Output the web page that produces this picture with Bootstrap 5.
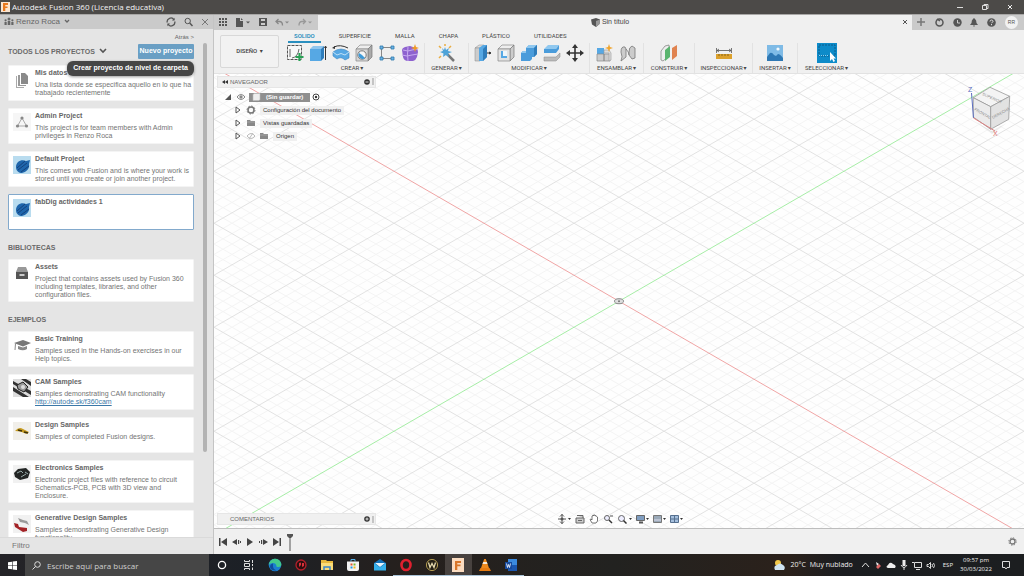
<!DOCTYPE html>
<html lang="es">
<head>
<meta charset="utf-8">
<meta name="viewport" content="width=device-width, initial-scale=1">
<title>Autodesk Fusion 360 (Licencia educativa)</title>
<link href="https://cdn.jsdelivr.net/npm/bootstrap@5.3.0/dist/css/bootstrap.min.css" rel="stylesheet">
<style>
body{font-family:"Liberation Sans",Arial,sans-serif;font-size:7px;line-height:8px;color:#555;background:#f0f0f0}
button{border:0;background:none;padding:0;color:inherit;font-family:inherit;font-size:inherit;line-height:inherit}
svg{display:block;flex:none}
.segoe{font-family:"Open Sans","Noto Sans",sans-serif}
.titlebar{height:15px;background:#4c4a48;color:#f4f4f4;font-size:8px;line-height:12px;padding:0 10px 0 1px;border-bottom:1px solid #a8a7a6}
.wincontrols{gap:17px}
/* data panel */
.datapanel{width:214px;flex:none;background:#e5e5e5;border-right:1px solid #c4c4c4}
.panelhead{height:15px;background:#cacaca;padding:0 4px 0 4px;font-size:8px;color:#666}
.panelbody{padding:4px 19px 0 8px;overflow:hidden;min-height:0}
.scrollthumb{position:absolute;right:6px;top:14px;width:4px;height:calc(100% - 116px);background:#b3b3b3;border-radius:2px}
.backlink{font-size:6px;color:#666;text-decoration:none}
.sect{font-size:7px;line-height:9px;font-weight:bold;color:#6a6a6a}
.newbtn{width:56px;height:15px;background:#6a9fc4;color:#fff;font-weight:bold;border-radius:1px}
.tip{position:absolute;right:19px;top:32px;background:#464646;color:#fff;font-weight:bold;border-radius:6px;height:15px;line-height:14px;padding:0 6px;box-shadow:0 1px 3px #0006;z-index:2}
.proj{background:#fff;border:1px solid #f4f4f4;min-height:36px;padding:2px 1px 1px 4px;gap:4px;border-radius:1px}
.proj.active-proj{border-color:#82a9cc}
.proj h3{font-size:7px;line-height:9px;margin:0 0 4px;font-weight:bold;color:#666}
.proj p{margin:0;color:#747474}
.proj.tall{min-height:43px}
.projlist{gap:7px}
.thumb{width:18px;height:18px;margin-top:2px}
.filterbar{height:18px;padding:0 12px;background:#e5e5e5;border-top:1px solid #dadada}
.filterbar input{border:0;background:none;font-size:8px;padding:0;outline:0}
.filterbar input::placeholder{color:#777;opacity:1}
/* document tabs and ribbon */
.doctabs{height:15px}
.qat{background:#cacaca;width:104px;padding:0 6px 0 5px}
.doctitle{background:#f0f0f0;color:#444;padding-right:10px}
.docright{background:#cacaca;padding:0 6px 0 4px;width:112px}
.avatar{width:13px;height:13px;border-radius:50%;background:#f2f2f2;font-size:5px;line-height:13px;color:#555}
.ribbon{height:44px;font-family:Roboto,sans-serif;font-size:6px;color:#444;border-bottom:1px solid #e2e2e2}
.workspace{width:59px;height:33px;margin:5px 0 0 6px;border:1px solid #d8d8d8;border-radius:2px;font-weight:500;background:#f2f2f2}
.rtabs{height:13px;padding-left:8px;gap:12px}
.rtabs button{padding:0 6px;height:13px;border-bottom:2px solid transparent;line-height:12px}
.rtabs .cur{color:#1787ba;border-color:#2a8fbf;font-weight:500}
.grp{height:30px;border-right:1px solid #e2e2e2;flex:none}
.grp:last-child{border:0}
.icons{gap:5px;height:21px}
.caret::after{content:"▾";font-family:"DejaVu Sans",sans-serif;font-size:6px;margin-left:1px}
/* canvas */
.viewport{background:#fefefe;min-height:0}
.overpanel{position:absolute;left:3px;width:159px;height:12px;background:#f0f0f0;font-size:6px;color:#666;border:1px solid #e6e6e6;padding:0 0 0 4px;gap:2px}
.browsertree{position:absolute;left:10px;top:17px;font-size:6px;color:#333}
.browsertree .line{height:13px}
.pill{background:#f0f0f0;padding:0 3px;height:9px;line-height:9px}
.rootnode{background:#8f8f8f;color:#fff;width:61px;height:9px;gap:5px;padding-left:3px;margin:0 2px 0 3px}
.navbarlow{position:absolute;left:343px;bottom:3px;height:12px;gap:4px}
.cubebox{position:absolute;right:10px;top:8px}
.timeline{height:26px;border-top:1px solid #bdbdbd;padding:0 7px 0 5px;background:#f0f0f0}
/* taskbar */
.taskbar{height:22px;background:linear-gradient(90deg,#242327,#1c2026 25%,#26201d 40%,#222220 60%,#2b211b 77%,#1b1d20 82%,#1c1e20);color:#eee;font-size:7px}
.winstart{width:25px;height:22px}
.search{width:184px;height:22px;background:#464646;padding-left:7px;gap:6px}
.search input{border:0;background:none;color:#ccc;font-size:8px;padding:0;outline:0;width:150px}
.search input::placeholder{color:#cfcfcf;opacity:1}
.apps{width:315px}
.apps button{height:22px;border-bottom:1px solid transparent}
.apps .run{border-color:#aac4d8}
.apps .front{background:#48423f}
.clock{font-size:6px;line-height:9px;width:38px}
</style>
</head>
<body class="vh-100 overflow-hidden d-flex flex-column">

<header class="titlebar segoe d-flex align-items-center">
  <svg width="9" height="10" viewBox="0 0 9 10" style="margin-right:2px"><rect width="9" height="10" fill="#fbe4cf"/><path d="M2 1h5v2H4.300v1.500h2.200v1.500H4.300V9H2z" fill="#e8781e"/></svg>
  <span>Autodesk Fusion 360 (Licencia educativa)</span>
  <div class="wincontrols ms-auto d-flex">
    <button aria-label="Minimizar"><svg width="8" height="8" stroke="#ddd"><path d="M1 4.500h6"/></svg></button>
    <button aria-label="Restaurar"><svg width="8" height="8" stroke="#ddd" fill="none"><path d="M1.500 2.500h4v4h-4zM3 2.500v-1h4v4h-1"/></svg></button>
    <button aria-label="Cerrar"><svg width="8" height="8" stroke="#eee"><path d="M2 2l4 4M6 2l-4 4"/></svg></button>
  </div>
</header>

<main class="d-flex flex-fill" style="min-height:0">
  <aside class="datapanel d-flex flex-column">
    <div class="panelhead d-flex align-items-center">
      <svg width="10" height="9" fill="#666"><circle cx="5" cy="2" r="1.500"/><path d="M3.700 4h2.600v4H3.700zM.5 5h2.200v3H.5zM7.300 5h2.200v3H7.300z"/><circle cx="1.600" cy="3.300" r="1.100"/><circle cx="8.400" cy="3.300" r="1.100"/></svg>
      <span style="margin-left:2px">Renzo Roca</span>
      <svg class="ms-1" width="6" height="5" fill="none" stroke="#666" stroke-width="1.300"><path d="M1 1l2 2 2-2"/></svg>
      <button class="ms-auto" aria-label="Actualizar"><svg width="10" height="10" fill="none" stroke="#555" stroke-width="1.300"><path d="M1.300 5.500A3.600 3.600 0 0 1 8 3M8.700 4.500A3.600 3.600 0 0 1 2 7"/><path d="M8.600.8v2.700H6zM1.400 9.200V6.500H4z" fill="#555" stroke="none"/></svg></button>
      <button class="ms-2" aria-label="Buscar"><svg width="9" height="10" fill="none" stroke="#555"><circle cx="3.700" cy="4" r="2.700"/><path d="M5.700 6L8.500 9" stroke-width="1.500"/></svg></button>
      <button class="ms-2" aria-label="Cerrar panel"><svg width="8" height="8" stroke="#777"><path d="M1 1l6 6M7 1l-6 6"/></svg></button>
    </div>
    <div class="position-relative flex-fill d-flex flex-column" style="min-height:0">
      <div class="panelbody flex-fill">
        <div class="text-end"><a href="#" class="backlink">Atrás &gt;</a></div>
        <div class="d-flex align-items-center mb-2 mt-1" style="height:12px">
          <span class="sect">TODOS LOS PROYECTOS</span>
          <svg class="ms-1" width="8" height="6" fill="none" stroke="#555" stroke-width="1.600"><path d="M1 1l3 3 3-3"/></svg>
          <button class="newbtn ms-auto">Nuevo proyecto</button>
        </div>
        <div class="tip" role="tooltip">Crear proyecto de nivel de carpeta</div>
        <div class="projlist d-flex flex-column">
          <article class="proj d-flex"><svg class="thumb" viewBox="0 0 18 18"><path d="M8 3h4l3 3v8H8z" fill="#8a8a8a"/><path d="M5 5h2v10h6v1H5z" fill="#999"/><path d="M3 6h1v11h7v1H3z" fill="#aaa"/></svg><div><h3>Mis datos</h3><p>Una lista donde se especifica aquello en lo que ha trabajado recientemente</p></div></article>
          <article class="proj d-flex"><svg class="thumb" viewBox="0 0 18 18"><rect width="18" height="18" fill="#f6f6f6"/><path d="M9 5L4.500 13h9z" fill="none" stroke="#aaa"/><g fill="#888"><circle cx="9" cy="5" r="1.600"/><circle cx="4.500" cy="13" r="1.600"/><circle cx="13.500" cy="13" r="1.600"/></g></svg><div><h3>Admin Project</h3><p>This project is for team members with Admin privileges in Renzo Roca</p></div></article>
          <article class="proj d-flex"><svg class="thumb" viewBox="0 0 18 18"><rect width="18" height="18" fill="#b9dcef"/><path d="M3 11C3 6 8 3 13 5l4-1-1 4c1 5-3 8-7 9-3 0-6-2-6-6z" fill="#1f66ac"/><path d="M4 12l8-7M5 14l9-7M8 16l8-6" stroke="#14427d" fill="none"/></svg><div><h3>Default Project</h3><p>This comes with Fusion and is where your work is stored until you create or join another project.</p></div></article>
          <article class="proj active-proj d-flex"><svg class="thumb" viewBox="0 0 18 18"><rect width="18" height="18" fill="#b9dcef"/><path d="M3 11C3 6 8 3 13 5l4-1-1 4c1 5-3 8-7 9-3 0-6-2-6-6z" fill="#1f66ac"/><path d="M4 12l8-7M5 14l9-7M8 16l8-6" stroke="#14427d" fill="none"/></svg><div><h3>fabDig actividades 1</h3></div></article>
        </div>
        <div class="sect" style="margin:13px 0 7px">BIBLIOTECAS</div>
        <article class="proj tall d-flex"><svg class="thumb" viewBox="0 0 18 18"><path d="M5 3h8l2 5H3z" fill="#999"/><path d="M3 8h12v7H3z" fill="#555"/><path d="M6.500 10h5v2h-5z" fill="#ccc"/></svg><div><h3>Assets</h3><p>Project that contains assets used by Fusion 360 including templates, libraries, and other configuration files.</p></div></article>
        <div class="sect" style="margin:13px 0 7px">EJEMPLOS</div>
        <div class="projlist d-flex flex-column">
          <article class="proj d-flex"><svg class="thumb" viewBox="0 0 18 18"><path d="M1 7l9-3 8 3-8 3.500z" fill="#777"/><path d="M5 10v3q5 2.500 9 0v-3l-4 1.500z" fill="#888"/><path d="M2.500 7.500L2 14" stroke="#888"/></svg><div><h3>Basic Training</h3><p>Samples used in the Hands-on exercises in our Help topics.</p></div></article>
          <article class="proj d-flex"><svg class="thumb" viewBox="0 0 18 18"><rect width="18" height="18" fill="#ddd"/><path d="M0 2l18 10v4L0 5zM0 8l16 10h-6L0 12zM8 0l10 7V3L13 0z" fill="#333"/><path d="M4 6l6-3 5 5-4 5-6-3z" fill="#999" stroke="#222"/><circle cx="10" cy="8" r="2" fill="#ddd"/></svg><div><h3>CAM Samples</h3><p>Samples demonstrating CAM functionality <a href="#" style="color:#3b78a8">http://autode.sk/f360cam</a></p></div></article>
          <article class="proj d-flex"><svg class="thumb" viewBox="0 0 18 18"><rect width="18" height="18" fill="#f1efea"/><path d="M2 9q4-5 8-2l6 3q-2 3-5 1T2 9z" fill="#c79b20"/><path d="M5 8l4 1M11 10l4 1" stroke="#3d3108" stroke-width="1.500"/></svg><div><h3>Design Samples</h3><p>Samples of completed Fusion designs.</p></div></article>
          <article class="proj tall d-flex"><svg class="thumb" viewBox="0 0 18 18"><rect width="18" height="18" fill="#f1f1f1"/><path d="M1 8l4-4 8-1 4 4-2 6-8 2-5-3z" fill="#232625"/><path d="M4 8l4-2 2 2M8 12l5-3M12 7l3 2" stroke="#9aa" fill="none"/></svg><div><h3>Electronics Samples</h3><p>Electronic project files with reference to circuit Schematics-PCB, PCB with 3D view and Enclosure.</p></div></article>
          <article class="proj tall d-flex"><svg class="thumb" viewBox="0 0 18 18"><rect width="18" height="18" fill="#f1f1f1"/><path d="M5 3l5 2 4 1 2 4-4-2-5-1z" fill="#9a9a9a"/><path d="M1 8l4 1 1 3 8 1v3l-4 1-8-5z" fill="#a32327"/></svg><div><h3>Generative Design Samples</h3><p>Samples demonstrating Generative Design functionality.</p></div></article>
        </div>
      </div>
      <div class="scrollthumb"></div>
      <div class="filterbar d-flex align-items-center"><input type="text" class="w-100" placeholder="Filtro" aria-label="Filtro"></div>
    </div>
  </aside>

  <section class="flex-fill d-flex flex-column" style="min-width:0">
    <div class="doctabs d-flex">
      <div class="qat d-flex align-items-center justify-content-between">
        <button aria-label="Panel de datos"><svg width="8" height="8" fill="#555"><path d="M0 0h2v2H0zM3 0h2v2H3zM6 0h2v2H6zM0 3h2v2H0zM3 3h2v2H3zM6 3h2v2H6zM0 6h2v2H0zM3 6h2v2H3zM6 6h2v2H6z"/></svg></button>
        <button aria-label="Archivo"><svg width="14" height="9" fill="#555"><path d="M0 0h4v3h3v6H0zM5 0l2 2H5zM10 3.500h4l-2 2z"/></svg></button>
        <button aria-label="Guardar"><svg width="8" height="8"><path d="M0 0h8v8H0z" fill="#555"/><path d="M2 1h4v2H2zM2 5h4v2H2z" fill="#ccc"/></svg></button>
        <button aria-label="Deshacer"><svg width="14" height="9" fill="none" stroke="#888" stroke-width="1.300"><path d="M3.500 1L1 3.500 3.500 6M1 3.500h3.500q3 0 3 4"/><path d="M10 3.500h4l-2 2z" fill="#888" stroke="none"/></svg></button>
        <button aria-label="Rehacer"><svg width="14" height="9" fill="none" stroke="#999" stroke-width="1.300"><path d="M5 1l2.500 2.500L5 6M7.500 3.500H4q-3 0-3 4"/><path d="M10 3.500h4l-2 2z" fill="#999" stroke="none"/></svg></button>
      </div>
      <div class="doctitle flex-fill d-flex align-items-center justify-content-center position-relative">
        <svg width="9" height="9" style="margin-right:2px"><path d="M0 1.500L5 0l4 1.500L8.500 6 5 9 1 6.500z" fill="#555"/><path d="M5 3l4-1.500L8.500 6 5 9z" fill="#999"/></svg>Sin título
        <button class="position-absolute end-0 me-1" aria-label="Cerrar documento"><svg width="6" height="6" stroke="#555"><path d="M1 1l4 4M5 1L1 5"/></svg></button>
      </div>
      <div class="docright d-flex align-items-center justify-content-between">
        <button aria-label="Nuevo documento"><svg width="10" height="8" stroke="#777" stroke-width="1.500"><path d="M5 0v8M1 4h8"/></svg></button>
        <button aria-label="Extensiones"><svg width="9" height="9" fill="none" stroke="#555" stroke-width="1.500"><circle cx="4.500" cy="4.500" r="3.500"/><path d="M2 1l3 2"/></svg></button>
        <button aria-label="Estado del trabajo"><svg width="9" height="9"><circle cx="4.500" cy="4.500" r="4.200" fill="#555"/><path d="M4.500 2v3H7" stroke="#ccc" fill="none"/></svg></button>
        <button aria-label="Notificaciones"><svg width="8" height="9" fill="#555"><path d="M4 0l1 1q1.500 1 1.500 4L8 7H0l1.500-2Q1.500 2 3 1zM3 7.500h2L4 9z"/></svg></button>
        <button aria-label="Ayuda"><svg width="9" height="9"><circle cx="4.500" cy="4.500" r="4.300" fill="#555"/><path d="M3 3.500Q3 2 4.500 2T6 3.500Q6 4.300 4.500 4.800M4.500 6v1.200" stroke="#ddd" fill="none"/></svg></button>
        <span class="avatar text-center">RR</span>
      </div>
    </div>

    <div class="ribbon d-flex">
      <button class="workspace caret">DISEÑO </button>
      <div class="d-flex flex-column" style="margin-left:1px">
        <nav class="rtabs d-flex"><button class="cur">SOLIDO</button><button>SUPERFICIE</button><button>MALLA</button><button>CHAPA</button><button>PLÁSTICO</button><button>UTILIDADES</button></nav>
        <div class="d-flex">
          <div class="grp d-flex flex-column align-items-center" style="width:145px"><div class="icons d-flex align-items-center">
            <svg width="18" height="18"><path d="M1.500 1.500h14v14h-14z" fill="#f8f8f8" stroke="#555" stroke-dasharray="3 1"/><path d="M4 13V5M6 14q6-1 7-9" stroke="#666" fill="none"/><path d="M13.500 9v8M9.500 13h8" stroke="#2aa055" stroke-width="2.200"/></svg>
            <svg width="18" height="18"><path d="M1 5l3-3h11l-3 3z" fill="#8fc6ee"/><path d="M1 5h11v12H1z" fill="#56a8e4"/><path d="M12 5l3-3v12l-3 3z" fill="#2f7dbb"/><path d="M16.500 3v13M15.500 4l1-2 1 2" stroke="#333" fill="none"/></svg>
            <svg width="18" height="18"><path d="M1 8Q9 2 17 8v6l-4 2q-4-4-8-1l-4-3z" fill="#56a8e4" stroke="#3c84bd" stroke-width=".6"/><path d="M1 8l4 3q4-3 8 0l4-3" fill="none" stroke="#bfe0f6"/><path d="M2 3q6-3 14 1" stroke="#333" fill="none"/><path d="M0 4l3-2v3z" fill="#333"/></svg>
            <svg width="18" height="18"><path d="M1 5l4-4h12l-4 4z" fill="#eee" stroke="#888" stroke-width=".7"/><path d="M13 5l4-4v12l-4 4z" fill="#aaa" stroke="#777" stroke-width=".7"/><path d="M1 5h12v12H1z" fill="#d6d6d6" stroke="#888" stroke-width=".7"/><circle cx="7" cy="11" r="4.200" fill="#f5f5f5" stroke="#777"/><path d="M4 9a4 4 0 0 0 6 5L7 11z" fill="#3d9ad8"/></svg>
            <svg width="18" height="18"><path d="M4 3.500h9M3.500 5v8M5 14.500h8" stroke="#888"/><path d="M2 2h3v3H2zM13 2h3v3h-3zM2 13h3v3H2zM13 13h3v3h-3z" fill="#6bb3e6" stroke="#2e78ab" stroke-width=".8"/></svg>
            <svg width="18" height="18"><path d="M1 6q0-2 3-3l5-1 6 2q2 1 2 4l-1 5q-1 3-4 4H7q-4 0-5-4z" fill="#8e62cf"/><path d="M2 6q5 2 9 0l5-1M7 3q-1 7 0 14M1 11q5 2 10 0l6-1" fill="none" stroke="#c7aaf0"/><path d="M14 0l1 3 3 1-3 1-1 3-1-3-3-1 3-1z" fill="#f09a24"/></svg>
          </div><button class="caret">CREAR</button></div>
          <div class="grp d-flex flex-column align-items-center" style="width:44px"><div class="icons d-flex align-items-center">
            <svg width="18" height="18"><path d="M8 9l8 8" stroke="#777" stroke-width="2.500"/><path d="M7 3l1 3 3-2-1 3 4 1-4 1.500 1 3.500-3-2-3 2 .5-3.500L2 8l3-1-1-3 2 2z" fill="#4ea3d8"/><path d="M7 0v2M1 2l2 2M13 2l-2 2M1 14l2-2" stroke="#e9ad42" stroke-width="1.500"/></svg>
          </div><button class="caret">GENERAR</button></div>
          <div class="grp d-flex flex-column align-items-center" style="width:121px"><div class="icons d-flex align-items-center">
            <svg width="18" height="18"><path d="M1 4l4-3h5l-3 3z" fill="#ddd" stroke="#888" stroke-width=".5"/><path d="M1 4h5v13H1z" fill="#ccc" stroke="#888" stroke-width=".5"/><path d="M5 4l4-3h4v12l-4 4H5z" fill="#56a8e4"/><path d="M9 5l4-4v12l-4 4z" fill="#2f7dbb"/><path d="M13 9h3M15.500 8l1.500 1-1.500 1z" stroke="#333" fill="#333"/></svg>
            <svg width="18" height="18"><path d="M1 5l4-4h12l-4 4z" fill="#eee" stroke="#888" stroke-width=".7"/><path d="M13 5l4-4v12l-4 4z" fill="#ccc" stroke="#777" stroke-width=".7"/><path d="M1 5h12v12H1z" fill="#e2e2e2" stroke="#888" stroke-width=".7"/><path d="M4 7h6v7H4z" fill="#56a8e4"/><path d="M6 7h4v5H6z" fill="#eef6fb"/></svg>
            <svg width="18" height="18"><path d="M6 4l3-3h8v9l-3 3h-2v2l-2 2H1V9l2-2h3z" fill="#4a9cdb"/><path d="M6 4l3-3h8l-3 3zM1 9l2-2h3v2z" fill="#90c8ef"/><path d="M14 4l3-3v9l-3 3z" fill="#2f7dbb"/></svg>
            <svg width="18" height="18"><path d="M1 5l4-4h11l-3 4z" fill="#90c8ef"/><path d="M1 5h12l3-4v4l-3 4H1z" fill="#4a9cdb"/><path d="M1 12h12l4-4" stroke="#eee" stroke-width="2" fill="none"/><path d="M1 13h12l4-4v4l-4 4H1z" fill="#bbb" stroke="#888" stroke-width=".5"/></svg>
            <svg width="18" height="18"><path d="M9 2v14M2 9h14" stroke="#333" stroke-width="1.600"/><path d="M9 0l3 4H6zM9 18l3-4H6zM0 9l4-3v6zM18 9l-4-3v6z" fill="#333"/></svg>
          </div><button class="caret">MODIFICAR</button></div>
          <div class="grp d-flex flex-column align-items-center" style="width:54px"><div class="icons d-flex align-items-center">
            <svg width="18" height="18"><path d="M1 4h7v6H1z" fill="#56a8e4"/><path d="M1 10h7v7H1zM8 10h6v7H8z" fill="#ccc" stroke="#888" stroke-width=".7"/><path d="M8 6h5l2 3v7l-2 1V9H8z" fill="#ddd" stroke="#999" stroke-width=".6"/><path d="M13 0l1 3 3 1-3 1-1 3-1-3-3-1 3-1z" fill="#f0a52e"/></svg>
            <svg width="18" height="18" fill="#ccc" stroke="#777" stroke-width=".8"><path d="M2 8q0-6 4-5l1 2v8l-5 4q2-4 0-9zM10 8q0-5 3-6l3 2v10l-3 1-3-4z"/><path d="M7 5q3 3 3 6" fill="none"/></svg>
          </div><button class="caret">ENSAMBLAR</button></div>
          <div class="grp d-flex flex-column align-items-center" style="width:51px"><div class="icons d-flex align-items-center">
            <svg width="18" height="18"><path d="M1 7l4-5 4-1v11l-6 5-2-1z" fill="#eee" stroke="#888" stroke-width=".8"/><path d="M5 6l5-4v11l-5 4z" fill="#5ab46e"/><path d="M12 4l5-3v11l-5 4z" fill="#e08350"/></svg>
          </div><button class="caret">CONSTRUIR</button></div>
          <div class="grp d-flex flex-column align-items-center" style="width:58px"><div class="icons d-flex align-items-center">
            <svg width="18" height="18"><path d="M1.500 4v5M16.500 4v5M2 6.500h14M4 5L2 6.500 4 8M14 5l2 1.500L14 8" stroke="#555" fill="none" stroke-width=".8"/><path d="M1 10h16v5H1z" fill="#dca12c"/><path d="M4 10v2M7 10v2M10 10v2M13 10v2" stroke="#8b6414"/></svg>
          </div><button class="caret">INSPECCIONAR</button></div>
          <div class="grp d-flex flex-column align-items-center" style="width:45px"><div class="icons d-flex align-items-center">
            <svg width="18" height="18"><path d="M1 1h16v16H1z" fill="#7fbbe6"/><circle cx="12" cy="5" r="1.600" fill="#f3f9fd"/><path d="M1 13l3-4q2-1 4 2l2 1 2-2q2 0 5 4v3H1z" fill="#2e78b4"/></svg>
          </div><button class="caret">INSERTAR</button></div>
          <div class="grp d-flex flex-column align-items-center" style="width:57px"><div class="icons d-flex align-items-center">
            <svg width="20" height="20"><path d="M0 0h20v20H0z" fill="#0d8bc9"/><path d="M2 2h16v11H2z" fill="none" stroke="#0a5c8c" stroke-dasharray="2 1"/><path d="M2 12.500h10" stroke="#8cd0f0" stroke-dasharray="1 1"/><path d="M13 9v9l2-2 1.500 3 1.500-1-1.500-2.500h2.500z" fill="#fff"/></svg>
          </div><button class="caret">SELECCIONAR</button></div>
        </div>
      </div>
    </div>

    <div class="viewport flex-fill position-relative overflow-hidden">
      <svg class="w-100 h-100 position-absolute" aria-hidden="true"><svg x="50%" y="50%" overflow="visible" id="grid"></svg></svg>

      <div class="overpanel d-flex align-items-center" style="top:2px">
        <svg width="6" height="6" fill="#333"><path d="M3 1v4L0 3zM6 1v4L3 3z"/></svg><span>NAVEGADOR</span>
        <button class="ms-auto" aria-label="Opciones del navegador"><svg width="6" height="6"><circle cx="3" cy="3" r="2.800" fill="#333"/><path d="M1.500 3h3" stroke="#ddd"/></svg></button><svg width="3" height="7" stroke="#999"><path d="M1 0v7"/></svg>
      </div>
      <div class="browsertree">
        <div class="line d-flex align-items-center">
          <svg width="8" height="8"><path d="M7 1v6H1z" fill="#555"/></svg>
          <svg class="ms-1" width="10" height="8" fill="none" stroke="#888"><path d="M1 4q4-5 8 0-4 5-8 0z"/><circle cx="5" cy="4" r="1.200" fill="#888"/></svg>
          <div class="rootnode d-flex align-items-center"><svg width="9" height="8"><path d="M1 1.500L2 .5h6v6l-1 1H1z" fill="#eee" stroke="#bbb" stroke-width=".6"/></svg><b>(Sin guardar)</b></div>
          <svg width="8" height="8"><circle cx="4" cy="4" r="3" fill="#fff" stroke="#444"/><circle cx="4" cy="4" r="1.200" fill="#333"/></svg>
        </div>
        <div class="line d-flex align-items-center" style="padding-left:11px">
          <svg width="6" height="8"><path d="M1 1v6l4-3z" fill="#fff" stroke="#555"/></svg>
          <svg width="10" height="10" style="margin-left:5px"><circle cx="5" cy="5" r="3" fill="none" stroke="#777" stroke-width="1.500"/><circle cx="5" cy="5" r="4" fill="none" stroke="#777" stroke-dasharray="1.500 1.600"/></svg>
          <span class="pill ms-1">Configuración del documento</span>
        </div>
        <div class="line d-flex align-items-center" style="padding-left:11px">
          <svg width="6" height="8"><path d="M1 1v6l4-3z" fill="#fff" stroke="#555"/></svg>
          <svg width="10" height="8" style="margin-left:5px"><path d="M1 1h3l1 1h4v5H1z" fill="#888"/><path d="M1 3h8" stroke="#bbb" stroke-width=".6"/></svg>
          <span class="pill ms-1">Vistas guardadas</span>
        </div>
        <div class="line d-flex align-items-center" style="padding-left:11px">
          <svg width="6" height="8"><path d="M1 1v6l4-3z" fill="#fff" stroke="#555"/></svg>
          <svg width="10" height="8" style="margin-left:5px" fill="none" stroke="#bbb"><path d="M1 4q4-5 8 0-4 5-8 0zM7 1L3 7"/></svg>
          <svg width="10" height="8" style="margin-left:3px"><path d="M1 1h3l1 1h4v5H1z" fill="#888"/><path d="M1 3h8" stroke="#bbb" stroke-width=".6"/></svg>
          <span class="pill ms-1">Origen</span>
        </div>
      </div>

      <div class="cubebox"><svg width="50" height="58" font-family="Liberation Sans">
        <path d="M11 39L27 49l16-8-15 11z" fill="#0001"/>
        <path d="M9.300 15.700L26 5.300l19.700 9-19 10.400z" fill="#f4f4f4" stroke="#999" stroke-width=".8"/>
        <path d="M9.300 15.700l17.400 9v22.600L9.300 35z" fill="#ebebeb" stroke="#999" stroke-width=".8"/>
        <path d="M26.700 24.700l19-10.400-1 23-18 10z" fill="#e2e2e2" stroke="#999" stroke-width=".8"/>
        <text x="18" y="13" font-size="4" fill="#888" transform="rotate(24 18 13)">SUPERIOR</text>
        <text x="10" y="28" font-size="4" fill="#888" transform="rotate(30 10 28)">FRONTAL</text>
        <text x="29" y="37" font-size="4" fill="#888" transform="rotate(-29 29 37)">DERECHA</text>
        <path d="M7.500 11L9.500 36" stroke="#5a6dc0" fill="none"/><path d="M9.500 36L31 49" stroke="#dd8080" fill="none"/>
        <text x="4" y="10" font-size="7" fill="#5a6dc0">Z</text><text x="29" y="54" font-size="7" fill="#dd7070">X</text>
      </svg></div>

      <div class="overpanel d-flex align-items-center" style="bottom:3px;padding-left:12px">COMENTARIOS
        <button class="ms-auto" aria-label="Opciones de comentarios"><svg width="6" height="6"><circle cx="3" cy="3" r="2.800" fill="#333"/><path d="M1.500 3h3M3 1.500v3" stroke="#ddd"/></svg></button><svg width="3" height="7" stroke="#999"><path d="M1 0v7"/></svg>
      </div>

      <div class="navbarlow d-flex align-items-center">
        <button aria-label="Órbita"><svg width="14" height="10"><path d="M5 0v10M1 5h8M3 2.500l2-2 2 2M3 7.500l2 2 2-2" stroke="#555" fill="none"/><circle cx="5" cy="5" r="1.500" fill="#555"/><path d="M11 4h3l-1.500 2z" fill="#333"/></svg></button>
        <button aria-label="Mirar a"><svg width="10" height="10"><path d="M1 4h8v5H1zM2 1.500h6V4" fill="#ccc" stroke="#666"/><path d="M3 6.500h4" stroke="#666"/></svg></button>
        <button aria-label="Encuadre"><svg width="10" height="10"><path d="M3 9L1 5.500l1-.5 1 1V2l1-.5.500.5V1h1.500v1l1-.5.500 1 1 .5v4L7 9z" fill="#fff" stroke="#555" stroke-width=".8"/></svg></button>
        <button aria-label="Zoom"><svg width="10" height="10"><circle cx="4" cy="4" r="2.500" fill="#eef" stroke="#666"/><path d="M6 6l3 3" stroke="#333" stroke-width="1.500"/><path d="M7 2h3" stroke="#555"/></svg></button>
        <button aria-label="Ajustar"><svg width="15" height="10"><circle cx="4.500" cy="4.500" r="3" fill="#eef" stroke="#666"/><path d="M6.500 6.500l3 3" stroke="#333" stroke-width="1.500"/><path d="M12 4h3l-1.500 2z" fill="#333"/></svg></button>
        <button aria-label="Visualización"><svg width="13" height="10"><path d="M.5 1.500h8v5h-8z" fill="#7f9dc0" stroke="#666"/><path d="M3 8.500h4" stroke="#555" stroke-width="2"/><path d="M10 4h3l-1.500 2z" fill="#333"/></svg></button>
        <button aria-label="Rejilla"><svg width="13" height="10"><path d="M.5 1.500h8v7h-8z" fill="#9aa9b8" stroke="#777"/><path d="M1 6h7" stroke="#dde"/><path d="M10 4h3l-1.500 2z" fill="#333"/></svg></button>
        <button aria-label="Ventanas gráficas"><svg width="13" height="10"><path d="M.5 1.500h8v7h-8z" fill="#a5bfdd" stroke="#56708f"/><path d="M4.500 1v8M0 5h9" stroke="#56708f"/><path d="M10 4h3l-1.500 2z" fill="#333"/></svg></button>
      </div>
    </div>

    <div class="timeline d-flex align-items-center">
      <div class="d-flex align-items-center" style="gap:5px">
        <button aria-label="Inicio"><svg width="8" height="8" fill="#444"><path d="M0 0h1.500v8H0zM8 0v8L2 4z"/></svg></button>
        <button aria-label="Paso anterior"><svg width="9" height="8" fill="#444"><path d="M5 1v6L0 4zM6 2h1.200v4H6zM8 3h1v2H8z"/></svg></button>
        <button aria-label="Reproducir"><svg width="8" height="8" fill="#444"><path d="M1 0v8l6-4z"/></svg></button>
        <button aria-label="Paso siguiente"><svg width="9" height="8" fill="#444"><path d="M4 1v6l5-3zM2 2h1.200v4H2zM0 3h1v2H0z"/></svg></button>
        <button aria-label="Final"><svg width="8" height="8" fill="#444"><path d="M6.500 0H8v8H6.500zM0 0v8l6-4z"/></svg></button>
        <svg width="8" height="18"><path d="M1 1h6v2L5 5H3L1 3z" fill="#555"/><path d="M4 3v15" stroke="#555"/></svg>
      </div>
      <button class="ms-auto" aria-label="Configuración"><svg width="9" height="9"><circle cx="4.500" cy="4.500" r="2.500" fill="none" stroke="#777" stroke-width="1.300"/><circle cx="4.500" cy="4.500" r="3.700" fill="none" stroke="#777" stroke-dasharray="1.400 1.500"/></svg></button>
    </div>
  </section>
</main>

<footer class="taskbar segoe d-flex align-items-center">
  <button class="winstart d-flex align-items-center justify-content-center" aria-label="Inicio de Windows"><svg width="9" height="9" fill="#fff"><path d="M0 1.300L4 .7v3.500H0zM4.600.6L9 0v4.200H4.600zM0 4.800h4v3.500L0 7.700zM4.600 4.800H9V9l-4.400-.6z"/></svg></button>
  <label class="search d-flex align-items-center"><svg width="9" height="9" fill="none" stroke="#ddd"><circle cx="5.500" cy="3.500" r="2.800"/><path d="M3.500 5.500L.5 8.500"/></svg><input class="segoe" type="text" placeholder="Escribe aquí para buscar" aria-label="Escribe aquí para buscar"></label>
  <div class="apps d-flex">
    <button class="flex-fill d-flex align-items-center justify-content-center" aria-label="Cortana"><svg width="14" height="14"><circle cx="7" cy="7" r="3.600" fill="none" stroke="#fff" stroke-width="1.300"/></svg></button>
    <button class="flex-fill d-flex align-items-center justify-content-center" aria-label="Vista de tareas"><svg width="14" height="14" fill="none" stroke="#ddd"><path d="M3.500 5.500h5v3h-5zM3.500 2v1.500h5V2M3.500 12v-1.500h5V12M11.500 2v3M11.500 6v2M11.500 9.500v2.500"/></svg></button>
    <button class="flex-fill d-flex align-items-center justify-content-center" aria-label="Edge"><svg width="14" height="14"><circle cx="7" cy="7" r="6.300" fill="#1b7fd0"/><path d="M.8 7A6.300 6.300 0 0 1 13.300 6q.2 3-3 3-2.500 0-2-2Q7 4.500 4.500 5 1.500 5.500.8 7z" fill="#41c98e"/><path d="M5 7q-.5 4 3.500 5.500Q3 13 2 9 2 6 5 5.500z" fill="#0f4c9c"/></svg></button>
    <button class="flex-fill d-flex align-items-center justify-content-center" aria-label="Grabador"><svg width="14" height="14"><circle cx="7" cy="7" r="5" fill="#2a0f10" stroke="#b3202a" stroke-width="1.300"/><path d="M5 5l2-.5V7L5 9zM8 5h2v3L8 9z" fill="#d8303a"/></svg></button>
    <button class="flex-fill d-flex align-items-center justify-content-center" aria-label="Explorador"><svg width="14" height="14"><path d="M1 2h5l1 1h6v9H1z" fill="#e9b93c"/><path d="M1 5h12v7H1z" fill="#fbdc78"/><path d="M4 12V9h6v3" fill="none" stroke="#3b86c8" stroke-width="1.500"/></svg></button>
    <button class="flex-fill d-flex align-items-center justify-content-center" aria-label="Microsoft Store"><svg width="14" height="14"><path d="M5 3.500V1.500h4v2" fill="none" stroke="#5ab2ea"/><path d="M1 3.500h12V11q0 2-2 2H3q-2 0-2-2z" fill="#f2f2f2"/><path d="M4.500 5.500h2v2h-2z" fill="#e5562e"/><path d="M7.500 5.500h2v2h-2z" fill="#7db82a"/><path d="M4.500 8.500h2v2h-2z" fill="#1e9be0"/><path d="M7.500 8.500h2v2h-2z" fill="#f4b81a"/></svg></button>
    <button class="flex-fill d-flex align-items-center justify-content-center" aria-label="Correo"><svg width="14" height="14"><path d="M1 5l6-4 6 4v7H1z" fill="#1270b8"/><path d="M2 5h10l-5 4z" fill="#e8f4fb"/><path d="M1 5l6 4.500L13 5v7.500H1z" fill="#35b1ec"/></svg></button>
    <button class="run flex-fill d-flex align-items-center justify-content-center" aria-label="Opera"><svg width="14" height="14"><ellipse cx="7" cy="7" rx="4.500" ry="5" fill="none" stroke="#e0202f" stroke-width="2.600"/></svg></button>
    <button class="run flex-fill d-flex align-items-center justify-content-center" aria-label="WeMod"><svg width="14" height="14"><circle cx="7" cy="7" r="5.600" fill="#252015" stroke="#b39b52"/><path d="M3.500 4.500l1.500 5 2-4 2 4 1.500-5" fill="none" stroke="#e6d9ae" stroke-width="1.300"/></svg></button>
    <button class="run front flex-fill d-flex align-items-center justify-content-center" aria-label="Fusion 360"><svg width="14" height="14"><path d="M1 0h12v14H1z" fill="#fbdcc0"/><path d="M4 3h6v2H6.300v1.500H9.500v1.800H6.300V12H4z" fill="#d9762a"/></svg></button>
    <button class="run flex-fill d-flex align-items-center justify-content-center" aria-label="VLC"><svg width="14" height="14"><path d="M6.200 1h1.600l3.200 9H3z" fill="#f08a1d"/><path d="M5.200 4h3.600l.7 2h-5z" fill="#f7e9d8"/><path d="M2.500 10h9l1.500 3H1z" fill="#e77c12"/></svg></button>
    <button class="run flex-fill d-flex align-items-center justify-content-center" aria-label="Word"><svg width="14" height="14"><path d="M4 1h9v12H4z" fill="#3b8ade"/><path d="M4 7h9v6H4z" fill="#1b56ae"/><path d="M1 4h7v7H1z" fill="#174a9c"/><path d="M2.500 5.500l1 4 1-3 1 3 1-4" fill="none" stroke="#fff" stroke-width=".8"/></svg></button>
  </div>
  <div class="ms-auto d-flex align-items-center" style="gap:4px">
    <svg width="13" height="12"><circle cx="5" cy="4" r="3" fill="#f2c84b"/><path d="M2 11q-2-4 2-5 3-3 6 0 3 2 1 5z" fill="#cfe3f1"/></svg>
    <span>20°C</span><span>Muy nublado</span>
  </div>
  <div class="d-flex align-items-center" style="gap:4px;margin-left:8px">
    <svg width="9" height="8" fill="none" stroke="#ddd"><path d="M1 6l3.500-4L8 6"/></svg>
    <svg width="8" height="9"><path d="M2 1l3 2-2 2z" fill="#eee"/><path d="M5 3l2 2-3 3-2-2z" fill="#d66"/></svg>
    <svg width="10" height="8"><path d="M2 7q-3-1 0-3 2-4 5-1 4 1 2 4z" fill="#eee"/></svg>
    <svg width="8" height="10"><path d="M2.500 0h3v6h-3z" fill="#eee"/><path d="M1 5q3 5 6 0M4 7v3" stroke="#ddd" fill="none"/></svg>
    <svg width="10" height="9" fill="none" stroke="#ddd"><path d="M2.500 1.500h7v5h-7zM0 1.500h2M4 8.500h4"/></svg>
    <svg width="9" height="9" fill="none" stroke="#ddd"><path d="M1 3.500h1.500L4.500 1.500v6l-2-2H1zM6 3q1 1.500 0 3M7.500 2q2 2.500 0 5"/></svg>
    <span class="ms-1" style="font-size:6px">ESP</span>
  </div>
  <div class="clock text-center ms-1">09:57 pm<br>30/03/2022</div>
  <svg width="10" height="10" style="margin:0 13px 0 6px" fill="none" stroke="#ddd"><path d="M1.500 1.500h7v6H6l-1 1.500-1-1.500H1.500z"/></svg>
</footer>

<script src="https://cdn.jsdelivr.net/npm/bootstrap@5.3.0/dist/js/bootstrap.bundle.min.js"></script>
<script>
// Isometric ground grid, drawn around the origin at the middle of the viewport
const grid = document.getElementById('grid'), ux = 45, uy = 26, far = 50, sub = 5;
const line = (k, dir, color, w) => {
  const s = k / sub, ox = -dir * s * ux, oy = s * uy;
  return `<path d="M${ox - dir * far * ux} ${oy - far * uy}L${ox + dir * far * ux} ${oy + far * uy}" stroke="${color}" stroke-width="${w}"/>`;
};
let minor = '', major = '';
for (let k = -170; k <= 170; k++) for (const dir of [1, -1]) {
  if (k === 0) continue;
  if (k % sub) minor += line(k, dir, '#f4f4f4', 1); else major += line(k, dir, '#e2e2e2', 1);
}
grid.innerHTML = minor + major + line(0, 1, '#f0a5a5', 1) + line(0, -1, '#a6eda6', 1) +
  '<ellipse rx="4.500" ry="2.500" fill="#ddd" stroke="#888"/><circle r="1" fill="#777"/>';
</script>
</body>
</html>
